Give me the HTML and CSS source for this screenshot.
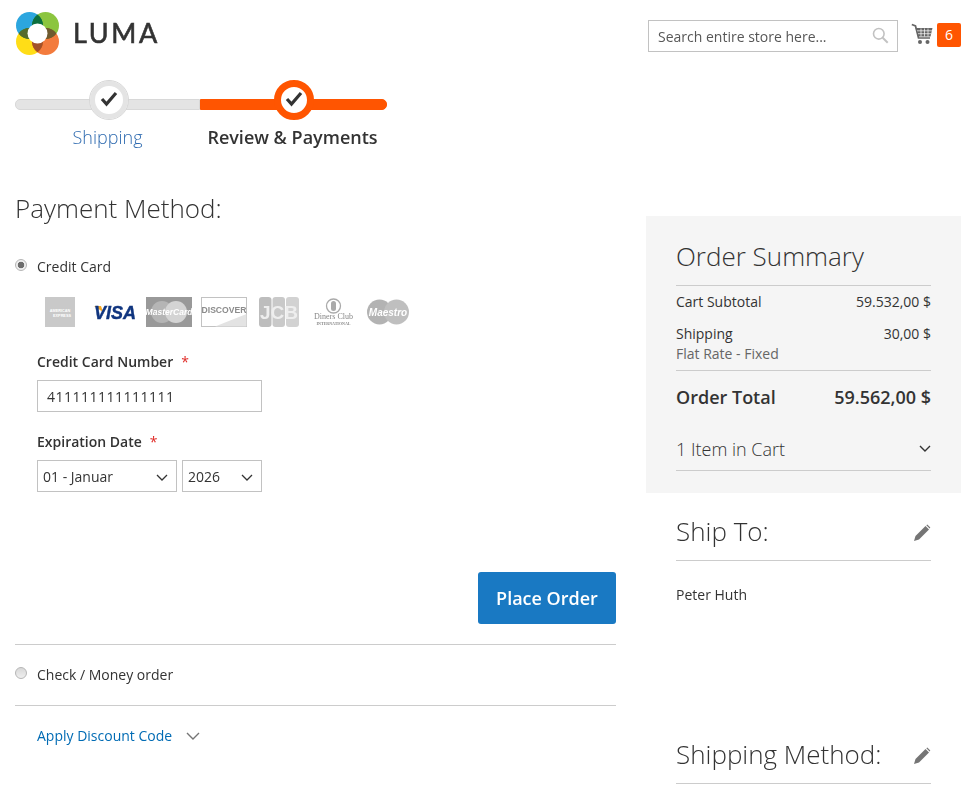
FILE: index.html
```html
<!DOCTYPE html>
<html lang="en">
<head>
<meta charset="utf-8">
<title>Checkout</title>
<link rel="stylesheet" href="styles.css">
</head>
<body>
<header class="header">
  <a class="logo" href="#">
    <svg class="logo-mark" width="44" height="44" viewBox="-0.5 0.5 44 44">
      <g class="logo-petals">
        <circle cx="14" cy="14" r="13.5" fill="#2ca6df"/>
        <circle cx="30" cy="14" r="13.5" fill="#8bc53f"/>
        <circle cx="14" cy="30" r="13.5" fill="#ffdd17"/>
        <circle cx="30" cy="30" r="13.5" fill="#f37b3d"/>
      </g>
      <path d="M22 3.130A13.500 13.500 0 0 1 22 24.870A13.500 13.500 0 0 1 22 3.130Z" fill="#0c6f3f"/>
      <path d="M3.130 22A13.500 13.500 0 0 1 24.870 22A13.500 13.500 0 0 1 3.130 22Z" fill="#566b2c"/>
      <path d="M19.130 22A13.500 13.500 0 0 1 40.870 22A13.500 13.500 0 0 1 19.130 22Z" fill="#6e5a2f"/>
      <path d="M22 19.130A13.500 13.500 0 0 1 22 40.870A13.500 13.500 0 0 1 22 19.130Z" fill="#a2512a"/>
      <circle cx="22" cy="22" r="10" fill="#fff"/>
    </svg>
    <span class="logo-text">LUMA</span>
  </a>
  <div class="header-tools">
    <form class="search">
      <input class="search-input" type="text" placeholder="Search entire store here...">
      <svg class="search-icon" width="17" height="17" viewBox="0 0 17 17"><circle cx="6.800" cy="6.800" r="5.300" fill="none" stroke="#c2c2c2" stroke-width="1.600"/><path d="M10.700 10.700l5 5" stroke="#c2c2c2" stroke-width="2"/></svg>
    </form>
    <a class="cart" href="#">
      <svg width="22" height="22" viewBox="0 0 22 22"><path d="M0.800 1.500l3.700 1.500 3 12h11.500" fill="none" stroke="#666" stroke-width="1.700"/><path d="M4.500 5h17l-2 8.500H7z" fill="#666"/><path d="M6 7.800h15M7 10.700h13M10 5.500v8M13.500 5.500v8M17 5.500v8" stroke="#fff" stroke-width="0.700"/><circle cx="9" cy="19" r="2" fill="#666"/><circle cx="16.500" cy="19" r="2" fill="#666"/></svg>
      <span class="cart-count">6</span>
    </a>
  </div>
</header>

<ol class="progress">
  <li class="step step-done">
    <span class="step-circle"><svg width="22" height="22" viewBox="0 0 22 22"><path d="M4 10l4.500 5L18 4" fill="none" stroke="#333" stroke-width="3.200"/></svg></span>
    <span class="step-label">Shipping</span>
  </li>
  <li class="step step-active">
    <span class="step-circle"><svg width="22" height="22" viewBox="0 0 22 22"><path d="M4 10l4.500 5L18 4" fill="none" stroke="#333" stroke-width="3.200"/></svg></span>
    <span class="step-label">Review &amp; Payments</span>
  </li>
</ol>

<main class="checkout">
  <section class="payment">
    <h1 class="title">Payment Method:</h1>
    <label class="method method-card">
      <input class="radio" type="radio" name="pay" checked>
      <span>Credit Card</span>
    </label>
    <ul class="cards">
      <li><svg class="card-svg" viewBox="0 0 46 30"><rect x="9" width="30" height="30" fill="#c9c9c9"/><text class="amex" x="24" y="15" text-anchor="middle">AMERICAN</text><text class="amex" x="26" y="20" text-anchor="middle">EXPRESS</text></svg></li>
      <li><svg class="card-svg" viewBox="0 0 46 30"><path d="M3 9h7l2 6z" fill="#f7a823"/><text class="visa" x="24" y="22" text-anchor="middle">VISA</text></svg></li>
      <li><svg class="card-svg" viewBox="0 0 46 30"><rect width="46" height="30" fill="#999"/><circle cx="16" cy="15" r="11" fill="#b5b5b5"/><circle cx="30" cy="15" r="11" fill="#d4d4d4"/><text class="mc" x="23" y="18" text-anchor="middle">MasterCard</text></svg></li>
      <li><svg class="card-svg" viewBox="0 0 46 30"><rect x=".5" y=".5" width="45" height="29" fill="#fff" stroke="#c2c2c2"/><path d="M14 29.500 45.500 17v12.500z" fill="#e3e3e3"/><text class="disc" x="23" y="16" text-anchor="middle">DISCOVER</text></svg></li>
      <li><svg class="card-svg" viewBox="0 0 46 30"><rect x="3" width="12.500" height="30" rx="3" fill="#bdbdbd"/><rect x="16.500" width="12.500" height="30" rx="3" fill="#c9c9c9"/><rect x="30" width="13" height="30" rx="3" fill="#d2d2d2"/><text class="jcb" x="23" y="22" text-anchor="middle">JCB</text></svg></li>
      <li><svg class="card-svg" viewBox="0 0 46 30"><circle cx="22.500" cy="9" r="7" fill="none" stroke="#aaa" stroke-width="1.300"/><rect x="20" y="4" width="5" height="10" rx="2.500" fill="#aaa"/><text class="diners" x="22.500" y="22" text-anchor="middle">Diners Club</text><text class="diners-sub" x="22.500" y="28" text-anchor="middle">INTERNATIONAL</text></svg></li>
      <li><svg class="card-svg" viewBox="0 0 46 30"><circle cx="13.500" cy="15" r="12.500" fill="#b3b3b3"/><circle cx="30.500" cy="15" r="12.500" fill="#bfbfbf"/><text class="mc mc-maestro" x="22" y="18.500" text-anchor="middle">Maestro</text></svg></li>
    </ul>
    <div class="form">
      <label class="field-label field-label-first">Credit Card Number<em class="req">*</em></label>
      <input class="text-input" type="text" value="411111111111111">
      <label class="field-label field-label-next">Expiration Date<em class="req">*</em></label>
      <div class="date-row">
        <div class="select-wrap select-month">
          <select class="select"><option>01 - Januar</option></select>
          <svg class="chevron" width="12" height="8" viewBox="0 0 12 8"><path d="M1 1l5 5 5-5" fill="none" stroke="#333" stroke-width="1.300"/></svg>
        </div>
        <div class="select-wrap select-year">
          <select class="select"><option>2026</option></select>
          <svg class="chevron" width="12" height="8" viewBox="0 0 12 8"><path d="M1 1l5 5 5-5" fill="none" stroke="#333" stroke-width="1.300"/></svg>
        </div>
      </div>
    </div>
    <div class="actions"><button class="place" type="button">Place Order</button></div>
    <label class="method method-check">
      <input class="radio" type="radio" name="pay">
      <span>Check / Money order</span>
    </label>
    <div class="discount">
      <a class="discount-link" href="#">Apply Discount Code</a>
      <svg width="14" height="9" viewBox="0 0 14 9"><path d="M1 1l6 6 6-6" fill="none" stroke="#757575" stroke-width="1.400"/></svg>
    </div>
  </section>

  <aside class="sidebar">
    <section class="summary">
      <h2 class="summary-title">Order Summary</h2>
      <div class="rows">
        <div class="row row-sub"><span>Cart Subtotal</span><span>59.532,00 $</span></div>
        <div class="row row-ship"><div><div>Shipping</div><div class="row-note">Flat Rate - Fixed</div></div><span>30,00 $</span></div>
      </div>
      <div class="row row-total"><span>Order Total</span><span>59.562,00 $</span></div>
      <div class="items">
        <span>1 Item in Cart</span>
        <svg width="12" height="8" viewBox="0 0 12 8"><path d="M1 1l5 5 5-5" fill="none" stroke="#333" stroke-width="1.400"/></svg>
      </div>
    </section>
    <section class="info info-ship">
      <div class="info-head"><h2 class="title">Ship To:</h2>
        <svg class="pencil" width="18" height="18" viewBox="0 0 18 18"><path d="M1 17l1.500-5L12.500 2l3.500 3.500-10 10z" fill="#757575"/><path d="M13.300 1.200l1-.7 3 3-.7 1z" fill="#757575"/></svg>
      </div>
      <p class="address">Peter Huth</p>
    </section>
    <section class="info info-method">
      <div class="info-head"><h2 class="title">Shipping Method:</h2>
        <svg class="pencil" width="18" height="18" viewBox="0 0 18 18"><path d="M1 17l1.500-5L12.500 2l3.500 3.500-10 10z" fill="#757575"/><path d="M13.300 1.200l1-.7 3 3-.7 1z" fill="#757575"/></svg>
      </div>
    </section>
  </aside>
</main>
</body>
</html>
```

FILE: styles.css
```css
* { box-sizing: border-box; }
html, body { margin: 0; padding: 0; }
body {
  width: 970px;
  height: 794px;
  overflow: hidden;
  padding: 0 9px 0 15px;
  background: #fff;
  color: #333;
  font-family: "Open Sans", "Liberation Sans", sans-serif;
  font-size: 14px;
  line-height: 20px;
}
a { text-decoration: none; color: inherit; }
ol, ul { list-style: none; margin: 0; padding: 0; }
h1, h2, p { margin: 0; }

.header { display: flex; justify-content: space-between; height: 80px; padding-top: 12px; }
.logo { display: flex; align-items: flex-start; gap: 14px; }
.logo-mark { display: block; }
.logo-petals circle { mix-blend-mode: multiply; }
.logo-text {
  font-family: Lato, sans-serif;
  font-weight: 400;
  font-size: 27px;
  line-height: 42px;
  letter-spacing: 2.600px;
  -webkit-text-stroke: 0.600px #333;
  color: #333;
}
.header-tools { display: flex; align-items: flex-start; padding-top: 8px; gap: 13px; }
.search { position: relative; width: 250px; height: 32px; }
.search-input {
  width: 100%;
  height: 32px;
  border: 1px solid #c2c2c2;
  padding: 0 9px;
  font: inherit;
  color: #333;
  outline: 0;
  background: #fff;
}
.search-input::placeholder { color: #575757; opacity: 1; }
.search-icon { position: absolute; right: 9px; top: 7px; }
.cart { display: flex; align-items: flex-start; gap: 4px; padding-top: 3px; }
.cart svg { display: block; }
.cart-count {
  width: 24px;
  height: 24px;
  border-radius: 2px;
  background: #ff5501;
  color: #fff;
  text-align: center;
  line-height: 24px;
  font-size: 14px;
}

.progress { display: flex; height: 111px; }
.step { position: relative; width: 185px; text-align: center; padding-top: 43px; }
.step-active { width: 187px; }
.step::before {
  content: "";
  position: absolute;
  left: 0;
  right: 0;
  top: 19px;
  height: 9px;
  background: #e4e4e4;
  border: 1px solid #d8d8d8;
}
.step-done::before { border-radius: 5px 0 0 5px; }
.step-active::before { background: #ff5501; border-color: #ff5501; border-radius: 0 5px 5px 0; }
.step-circle {
  position: absolute;
  left: 74px;
  top: 0;
  width: 40px;
  height: 40px;
  border-radius: 50%;
  background: #fff;
  border: 1px solid #d6d6d6;
  box-shadow: inset 0 0 0 5px #e4e4e4;
  display: flex;
  align-items: center;
  justify-content: center;
}
.step-active .step-circle { border: 7px solid #ff5501; box-shadow: none; }
.step-label { display: block; font-size: 18px; line-height: 28px; }
.step-done .step-label { font-weight: 300; color: #2f6bb0; }
.step-active .step-label { font-weight: 600; padding-right: 2px; }

.checkout { display: grid; grid-template-columns: 601px 315px; gap: 30px; align-items: start; }
.title { font-size: 26px; font-weight: 300; line-height: 34px; }

.payment { display: block; }
.method { display: flex; align-items: center; gap: 10px; height: 20px; }
.method-card { margin-top: 32px; }
.radio {
  appearance: none;
  width: 12px;
  height: 12px;
  margin: -4px 0 0 0;
  border-radius: 50%;
  border: 1px solid #b5b5b5;
  background: linear-gradient(#d8d8d8, #efefef);
}
.radio:checked { background: radial-gradient(circle, #6d6d6d 0 3px, #efefef 3.600px); }
.cards { display: flex; gap: 9px; margin: 20px 0 0 21px; }
.card-svg { display: block; width: 46px; height: 30px; }
.amex { font: 700 3.800px "Liberation Sans", sans-serif; fill: #fff; }
.visa { font: italic 700 18px "Liberation Sans", sans-serif; fill: #10357f; stroke: #10357f; stroke-width: 0.400px; }
.mc { font: italic 700 8.500px "Liberation Sans", sans-serif; fill: #fff; }
.mc-maestro { font-size: 10px; }
.disc { font: 700 8.600px "Liberation Sans", sans-serif; fill: #8c8c8c; }
.jcb { font: 700 19px "Liberation Sans", sans-serif; fill: #eee; }
.diners { font: 8px "Liberation Serif", serif; fill: #888; }
.diners-sub { font: 700 4px "Liberation Serif", serif; fill: #888; }

.form { padding-left: 22px; }
.field-label { display: block; font-weight: 600; }
.field-label-first { margin-top: 25px; }
.field-label-next { margin-top: 20px; }
.req { font-style: normal; font-weight: 400; color: #e02b27; margin-left: 8px; }
.text-input {
  display: block;
  width: 225px;
  height: 32px;
  margin-top: 8px;
  padding: 0 9px;
  border: 1px solid #c2c2c2;
  font: inherit;
  letter-spacing: 0.500px;
  color: #333;
  outline: 0;
}
.date-row { display: flex; gap: 5px; margin-top: 8px; }
.select-wrap { position: relative; height: 32px; }
.select-month { width: 140px; }
.select-year { width: 80px; }
.select {
  appearance: none;
  width: 100%;
  height: 32px;
  padding: 1px 5px 0;
  border: 1px solid #c2c2c2;
  border-radius: 0;
  background: #fff;
  font: inherit;
  color: #333;
}
.chevron { position: absolute; right: 9px; top: 14px; pointer-events: none; }

.actions { display: flex; justify-content: flex-end; margin-top: 80px; padding-bottom: 20px; border-bottom: 1px solid #ccc; }
.place {
  width: 138px;
  height: 52px;
  border: 0;
  border-radius: 3px;
  background: #1979c3;
  color: #fff;
  font: 600 18px "Open Sans", sans-serif;
}
.method-check { height: 61px; border-bottom: 1px solid #ccc; }
.discount { display: flex; align-items: center; gap: 14px; padding: 20px 0 0 22px; }
.discount-link { color: #006bb4; }

.sidebar { margin-top: 25px; }
.summary { height: 277px; background: #f5f5f5; padding: 23px 30px 0; }
.summary-title { font-size: 26px; font-weight: 300; line-height: 34px; padding-bottom: 12px; border-bottom: 1px solid #ccc; }
.rows { padding-top: 6px; }
.row { display: flex; justify-content: space-between; }
.row-ship { margin-top: 12px; padding-bottom: 6px; border-bottom: 1px solid #ccc; }
.row-note { color: #666; }
.row-total { font-size: 18px; font-weight: 600; line-height: 26px; padding-top: 13px; }
.items {
  display: flex;
  justify-content: space-between;
  align-items: center;
  height: 44px;
  margin-top: 17px;
  border-bottom: 1px solid #ccc;
  font-size: 18px;
  font-weight: 300;
}

.info { padding: 0 30px; }
.info-head { display: flex; justify-content: space-between; align-items: center; padding-bottom: 12px; border-bottom: 1px solid #ccc; }
.info-ship { padding-top: 21px; height: 244px; }
.address { padding-top: 24px; }
.pencil { display: block; margin-top: 4px; }
```
